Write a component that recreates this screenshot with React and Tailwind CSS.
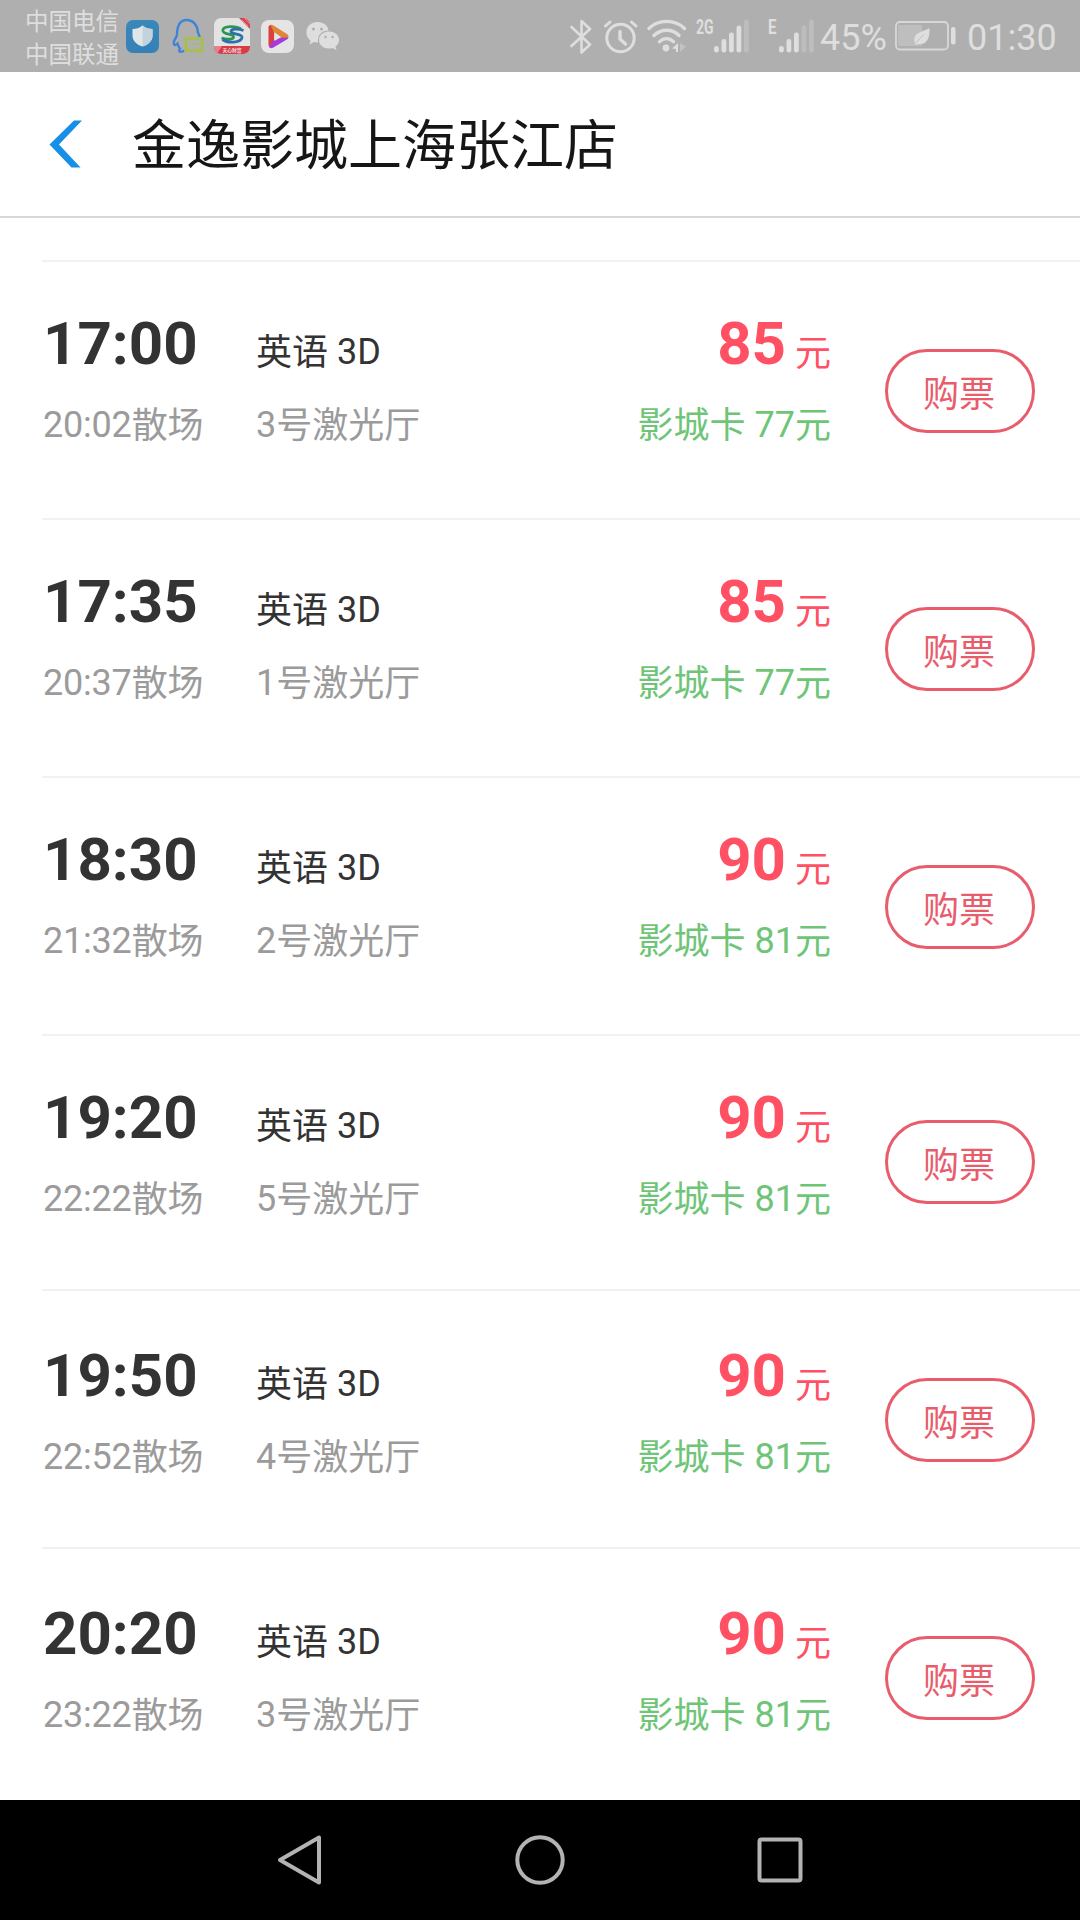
const SESSIONS = [
  { start: "17:00", end: "20:02", lang: "英语", format: "3D", hall: "3", price: 85, card: 77 },
  { start: "17:35", end: "20:37", lang: "英语", format: "3D", hall: "1", price: 85, card: 77 },
  { start: "18:30", end: "21:32", lang: "英语", format: "3D", hall: "2", price: 90, card: 81 },
  { start: "19:20", end: "22:22", lang: "英语", format: "3D", hall: "5", price: 90, card: 81 },
  { start: "19:50", end: "22:52", lang: "英语", format: "3D", hall: "4", price: 90, card: 81 },
  { start: "20:20", end: "23:22", lang: "英语", format: "3D", hall: "3", price: 90, card: 81 },
];

// row height, text offset and button offset per row
const ROW_CLASS = [
  "h-[258px]", "h-[258px]", "h-[258px]", "h-[255px]", "h-[258px]", "h-[253px]",
];
const TEXT_CLASS = [
  "pt-[46px]", "pt-[46px]", "pt-[46px]", "pt-[46px]", "pt-[49px]", "pt-[49px]",
];
const BUTTON_CLASS = [
  "mt-[87px]", "mt-[87px]", "mt-[87px]", "mt-[84px]", "mt-[87px]", "mt-[87px]",
];

function ShieldIcon() {
  return (
    <svg className="ml-[7px] shrink-0" width="33" height="33" viewBox="0 0 33 33">
      <defs>
        <linearGradient id="shieldBg" x1="0" y1="0" x2="0" y2="1">
          <stop offset="0" stopColor="#3a87b9" />
          <stop offset="1" stopColor="#3581b8" />
        </linearGradient>
      </defs>
      <rect width="33" height="33" rx="7" fill="url(#shieldBg)" />
      <path d="M16.5 5.5 C19 8 23 9 26.5 9 V16 C26.5 21 22 25 16.5 26.5 C11 25 6.5 21 6.5 16 V9 C10 9 14 8 16.5 5.5Z" fill="#dfe6ea" />
      <path d="M16.5 5.5 C19 8 23 9 26.5 9 V16 C26.5 21 22 25 16.5 26.5Z" fill="#c3d3de" />
    </svg>
  );
}

function QQIcon() {
  return (
    <svg className="ml-[13px] shrink-0" width="32" height="36" viewBox="0 0 32 36" fill="none">
      <path
        d="M11.5 33 C9 34.5 5.5 34 8 30.5 C6.5 29 6 27.5 5.5 25.5 C3 28 1.5 27 1.8 24 C2.2 21 4.5 20 5 17 C5 7 8.500 2 14.500 2 C21 2 25.500 7 25.800 14 L27.500 18.500"
        stroke="#3f84d6" strokeWidth="2.400" strokeLinecap="round"
      />
      <path d="M14 20.500 H30 V32.500 H28 V34 L25 32.500 H14Z" stroke="#a9bd55" strokeWidth="3" />
      <path d="M17 26 H27" stroke="#a9bd55" strokeWidth="1.800" strokeDasharray="2 1.500" />
    </svg>
  );
}

function StockIcon() {
  return (
    <svg className="ml-[10px] shrink-0" width="36" height="36" viewBox="0 0 36 36">
      <defs>
        <clipPath id="stockClip"><rect width="36" height="36" rx="7" /></clipPath>
      </defs>
      <g clipPath="url(#stockClip)">
        <rect width="36" height="36" fill="#e2e3e2" />
        <path d="M25 0 H36 V11Z" fill="#d8434d" />
        <path d="M28 2 L34 8 M31 1 L35 5" stroke="#e6a0a3" strokeWidth="0.800" />
        <rect y="28" width="36" height="8" fill="#d63c46" />
        <path d="M0 28 H8 L3 36 H0Z" fill="#e08287" />
        <path d="M27 11 C22 7.500 9 7.500 8.800 12.500 C9 17 19.500 15.500 19.500 19 C19.500 21.500 13 22 7.500 20" fill="none" stroke="#2f9455" strokeWidth="2.800" />
        <path d="M29.500 12.500 C25 10.500 16.500 10.500 17 13.500 C18 17 28.500 15.500 28 19.500 C27 25 14 25.500 8.500 21.500" fill="none" stroke="#2a72a9" strokeWidth="2.800" />
        <text x="18" y="34" fontSize="4.800" fontWeight="700" textAnchor="middle" fill="#efdede">天心财富</text>
      </g>
    </svg>
  );
}

function PlayIcon() {
  return (
    <svg className="ml-[11px] shrink-0" width="33" height="33" viewBox="0 0 33 33">
      <rect width="33" height="33" rx="8" fill="#e6e5e6" />
      <path d="M7.500 6.500 Q8 4.500 10.500 5 L13.500 7 L13 22 L8.500 27.500 Q7.500 26 7.500 24Z" fill="#d9413f" />
      <path d="M9.500 4.800 Q11 4.600 12.500 5.500 L26 14 Q28.500 16 27 18.500 L20.500 18 L12.500 11.500Z" fill="#df8734" />
      <path d="M27.300 17.500 Q27 19 25 20 L12 27.800 Q9 29 8 26.500 L13 20 L20 17.500Z" fill="#a63bd8" />
      <path d="M13.500 12.500 L20 17 L13.500 21Z" fill="#e6e5e6" />
    </svg>
  );
}

function WeChatIcon() {
  return (
    <svg className="ml-[12px] shrink-0" width="34" height="30" viewBox="0 0 34 30">
      <path d="M11.500 1 C18 1 22 5 22.500 9.500 C16 9.500 11.500 14 12 20 L12 21.500 L8 21 L3.500 23.500 L4.500 19.500 C-3 14 0 1 11.500 1Z" fill="#dedede" />
      <path d="M23 10.500 C29 10.500 33 14.500 33 19 C33 22 31.500 24 29.500 25.500 L30.500 29 L26.500 27 C19 29 13 25 13 19 C13 14.500 17 10.500 23 10.500Z" fill="#dedede" />
      <circle cx="7.500" cy="8" r="1.500" fill="#afafaf" />
      <circle cx="15.500" cy="8" r="1.500" fill="#afafaf" />
      <circle cx="19.500" cy="16" r="1.300" fill="#afafaf" />
      <circle cx="26.500" cy="16" r="1.300" fill="#afafaf" />
    </svg>
  );
}

function BluetoothIcon() {
  return (
    <svg className="shrink-0" width="22" height="36" viewBox="0 0 22 36" fill="none" stroke="#dedede" strokeWidth="2.600" strokeLinejoin="round" strokeLinecap="round">
      <path d="M1.500 9 L20 26.500 L11.500 34.500 V3 L20 11 L1.500 28" />
    </svg>
  );
}

function AlarmIcon() {
  return (
    <svg className="ml-[12px] shrink-0" width="34" height="36" viewBox="0 0 34 36" fill="none" stroke="#dedede" strokeLinecap="round" strokeLinejoin="round">
      <circle cx="16.500" cy="20" r="13.700" strokeWidth="3" />
      <path d="M16 13.500 V21 L21.500 26" strokeWidth="3.400" />
      <path d="M1.500 8 L6 4 M27.500 4 L32 8" strokeWidth="3" />
    </svg>
  );
}

function WifiIcon() {
  return (
    <svg className="ml-[9px] shrink-0" width="40" height="36" viewBox="0 0 40 36" fill="none" stroke="#dedede" strokeWidth="3.400" strokeLinecap="round">
      <path d="M2 10.500 C11 1 28 1 37.500 10.500" />
      <path d="M7 17.500 C14 10.500 25.500 10.500 32 17.500" />
      <path d="M12.500 23.800 C16 19.500 23 19.500 26.500 23.800" />
      <circle cx="19" cy="30" r="3.400" fill="#dedede" stroke="none" />
      <path d="M31 25 V34 H29 V31 L25 30.500Z" fill="#dedede" stroke="none" />
      <path d="M33 25 V34 L39 28.500Z" fill="#c2c2c2" stroke="none" />
    </svg>
  );
}

function SignalBars({ level }) {
  const heights = [6.5, 13.5, 20, 27, 33];
  return (
    <svg className="shrink-0" width="36" height="34" viewBox="0 0 36 34">
      {heights.map((h, i) => (
        <rect key={h} x={i * 7.5} y={33.5 - h} width="4.800" height={h} rx="2.200"
          fill={i < level ? "#dedede" : "#bdbdbd"} />
      ))}
    </svg>
  );
}

function BatteryIcon() {
  return (
    <svg className="ml-[9px] shrink-0" width="62" height="30" viewBox="0 0 62 30">
      <rect x="1" y="1" width="52" height="27.500" rx="4" fill="none" stroke="#d8d8d8" strokeWidth="1.800" />
      <rect x="3" y="4" width="24" height="21" rx="1" fill="#bebebe" />
      <rect x="56" y="6" width="4.500" height="17.500" rx="2" fill="#dedede" />
      <path d="M34.500 7 C35 15 33 23 25 23 L20 23.500 L19.500 21 C18 11 28 11 34.500 7Z" fill="#dedede" />
      <path d="M20 22.500 L29 13.500" stroke="#bababa" strokeWidth="0.900" />
    </svg>
  );
}

function StatusBar() {
  return (
    <div className="flex h-[72px] items-start bg-[#afafaf] text-[#dedede]">
      <div className="ml-[25px] mt-[6px] w-[94px] text-[23.5px] leading-[33px]">
        <div>中国电信</div>
        <div>中国联通</div>
      </div>
      <div className="mt-[18px] flex h-9 items-center">
        <ShieldIcon />
        <QQIcon />
        <StockIcon />
        <PlayIcon />
        <WeChatIcon />
      </div>
      <div className="ml-[230px] mt-[18px] flex h-9 items-center">
        <BluetoothIcon />
        <AlarmIcon />
        <WifiIcon />
        <span className="ml-[9px] w-[18px] self-start text-[20px] font-bold leading-[18px]">
          <span className="inline-block origin-left scale-x-[0.7]">2G</span>
        </span>
        <SignalBars level={4} />
        <span className="ml-[18px] w-[11px] self-start text-[20px] font-bold leading-[18px]">
          <span className="inline-block origin-left scale-x-[0.75]">E</span>
        </span>
        <SignalBars level={3} />
        <span className="ml-[5px] w-[66px] pt-[3px] text-[36px] leading-9">45%</span>
        <BatteryIcon />
        <span className="ml-[10px] pt-[3px] text-[36px] leading-9">01:30</span>
      </div>
    </div>
  );
}

function Header() {
  return (
    <div className="flex h-[146px] items-center border-b-2 border-[#d6d8d6] bg-white">
      <svg className="ml-[49px] shrink-0" width="34" height="48" viewBox="0 0 34 48">
        <path d="M25 0.500 H33 L10 24.500 L31.500 47.500 H22.500 L0.500 24.500Z" fill="#188fe6" />
      </svg>
      <h1 className="ml-[49px] pt-[5px] text-[54px] leading-[72px] text-[#161616]">金逸影城上海张江店</h1>
    </div>
  );
}

function SessionRow({ session, index }) {
  return (
    <div className={`ml-[42px] flex items-start border-t-2 border-[#f1f1f1] ${ROW_CLASS[index]}`}>
      <div className={`flex w-[789px] justify-between ${TEXT_CLASS[index]}`}>
        <div className="ml-px">
          <div className="flex items-baseline leading-[72px]">
            <span className="w-[213px] text-[60px] font-bold text-[#333]">{session.start}</span>
            <span className="text-[36px] text-[#333]">
              <span className="align-[-1px] leading-none">{session.lang}</span> {session.format}
            </span>
          </div>
          <div className="mt-[13px] flex text-[36px] leading-[48px] text-[#9b9b9b]">
            <span className="w-[213px] tracking-[-0.2px]">
              {session.end}<span className="align-[-1px] leading-none">散场</span>
            </span>
            <span>{session.hall}<span className="align-[-1px] leading-none">号激光厅</span></span>
          </div>
        </div>
        <div className="text-right">
          <div className="text-[36px] leading-[72px] text-[#ff5064]">
            <span className="text-[60px] font-bold leading-[72px]">{session.price}</span>{" "}
            <span className="align-[-2px] leading-none">元</span>
          </div>
          <div className="mt-[13px] text-[36px] leading-[48px] text-[#6fc577]">
            <span className="align-[-1px] leading-none">影城卡</span> {session.card}
            <span className="align-[-1px] leading-none">元</span>
          </div>
        </div>
      </div>
      <button className={`ml-[54px] h-[84px] w-[150px] rounded-full border-3 border-[#e85c6c] pr-[2px] pt-[8px] text-[36px] leading-[48px] text-[#e85c6c] ${BUTTON_CLASS[index]}`}>
        购票
      </button>
    </div>
  );
}

function NavBar() {
  return (
    <div className="grid h-[120px] grid-cols-3 place-items-center bg-black px-[180px]">
      <svg width="50" height="52" viewBox="0 0 50 52" fill="none" stroke="#b3b3b3" strokeWidth="4" strokeLinejoin="round">
        <path d="M44 3.500 V48.500 L5 26Z" />
      </svg>
      <svg width="50" height="50" viewBox="0 0 50 50" fill="none" stroke="#b3b3b3" strokeWidth="4">
        <circle cx="25" cy="25" r="22.700" />
      </svg>
      <svg width="46" height="46" viewBox="0 0 46 46" fill="none" stroke="#b3b3b3" strokeWidth="4">
        <rect x="2.500" y="2.500" width="41" height="41" rx="2" />
      </svg>
    </div>
  );
}

export default function App() {
  return (
    <div className="flex h-[1920px] w-[1080px] flex-col overflow-hidden bg-white font-['Roboto','Noto_Sans_CJK_SC',sans-serif]">
      <StatusBar />
      <Header />
      <div className="h-[1582px] overflow-hidden pt-[42px]">
        {SESSIONS.map((s, i) => (
          <SessionRow key={s.start} session={s} index={i} />
        ))}
      </div>
      <NavBar />
    </div>
  );
}
